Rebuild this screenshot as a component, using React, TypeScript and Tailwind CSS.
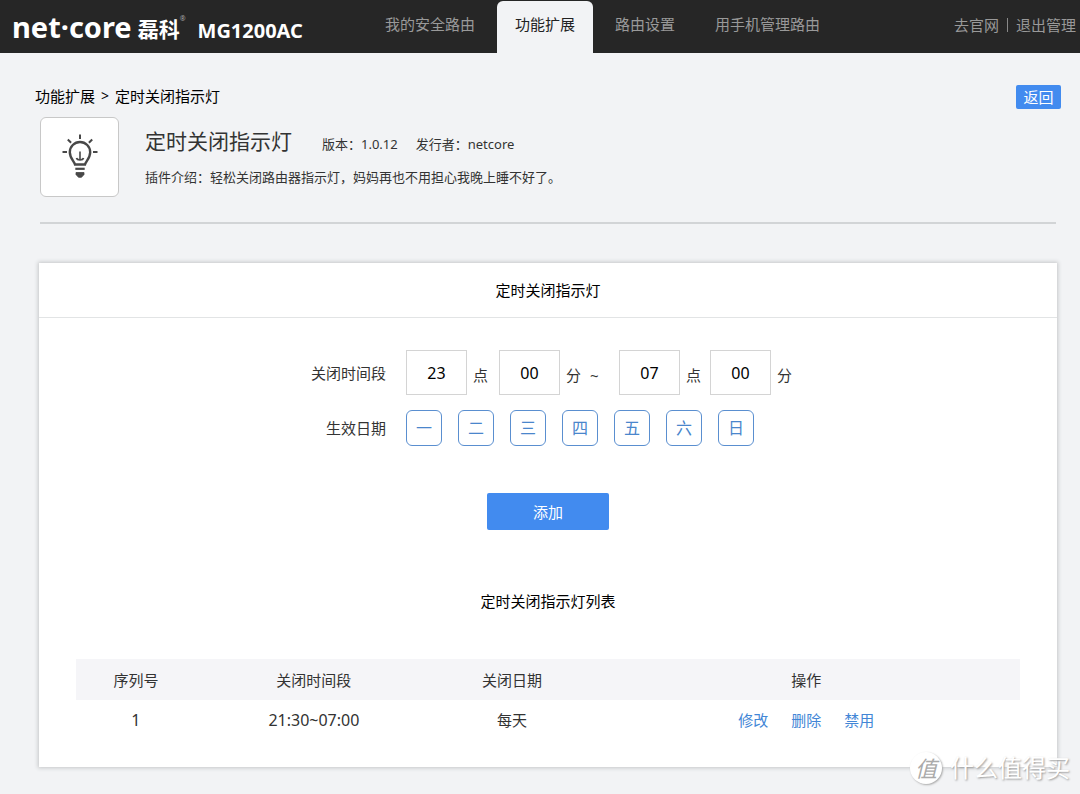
import { useState } from "react";

const NAV_ITEMS = ["我的安全路由", "功能扩展", "路由设置", "用手机管理路由"];
const DAYS = ["一", "二", "三", "四", "五", "六", "日"];

function Header() {
  return (
    <header className="flex h-[53px] items-stretch justify-between bg-[#262626] pr-1 pl-3 text-[15px] leading-5 text-[#999999]">
      <div className="flex items-stretch">
        <div className="flex w-[355px] shrink-0 items-start pt-[7px] text-white">
          <span className="text-[29px] leading-10 font-bold">net·core</span>
          <span className="ml-1.5 text-[21px] leading-11 font-bold">磊科</span>
          <span className="pt-1 text-[7px] leading-4 text-[#aaaaaa]">®</span>
          <span className="ml-3 pt-1 text-[20px] leading-10 font-bold">MG1200AC</span>
        </div>
        <nav className="flex items-stretch gap-1 pt-px">
          {NAV_ITEMS.map((item, i) => (
            <a
              key={item}
              href="#"
              className={
                i === 1
                  ? "rounded-t-md bg-[#f2f3f5] px-[18px] pt-[13px] whitespace-nowrap text-[#222222]"
                  : "px-[18px] pt-[13px] whitespace-nowrap"
              }
            >
              {item}
            </a>
          ))}
        </nav>
      </div>
      <div className="flex items-center gap-2 pb-1 whitespace-nowrap">
        <a href="#">去官网</a>
        <span className="h-3.5 w-px bg-[#888888]" />
        <a href="#">退出管理</a>
      </div>
    </header>
  );
}

function BulbIcon() {
  return (
    <svg width="44" height="48" viewBox="0 0 44 48" fill="none" stroke="#484848" strokeWidth="2" aria-hidden="true">
      <path d="M22 1.500v4.500M9.800 6.500l3.300 3.300M34.200 6.500l-3.300 3.300M4.500 19h4.500M35 19h4.500" />
      <path d="M17 31.500c-.8-3.200-5.200-6.300-5.200-12.300a10.200 10.200 0 0 1 20.400 0c0 6-4.400 9.100-5.200 12.300z" strokeWidth="2.400" />
      <path d="M22 18.500v8" strokeWidth="1.600" />
      <path d="M18.500 25c.8 2.500 6.200 2.500 7 0" strokeWidth="1.800" />
      <path d="M17.300 35.800h9.400" strokeWidth="2.200" />
      <path d="M18 39.500h8v2l-2.500 2.800h-3L18 41.500z" fill="#484848" strokeWidth="0.800" />
    </svg>
  );
}

function PluginInfo() {
  return (
    <section className="mr-6 ml-10 flex gap-[26px] border-b-2 border-[#d2d4d6] pb-[25px] text-[13px] leading-5 text-[#333333]">
      <div className="flex h-20 w-[79px] shrink-0 items-center justify-center rounded-md border border-[#c8c8c8] bg-white">
        <BulbIcon />
      </div>
      <div className="pt-2">
        <div className="flex items-baseline">
          <h1 className="text-[21px] leading-8">定时关闭指示灯</h1>
          <span className="ml-[30px]">版本：1.0.12</span>
          <span className="ml-[18px]">发行者：netcore</span>
        </div>
        <p className="mt-2.5">插件介绍：轻松关闭路由器指示灯，妈妈再也不用担心我晚上睡不好了。</p>
      </div>
    </section>
  );
}

function TimeBox({ label, initial }: { label: string; initial: string }) {
  const [value, setValue] = useState(initial);
  return (
    <input
      type="text"
      aria-label={label}
      value={value}
      onChange={(e) => setValue(e.target.value)}
      className="h-[45px] w-[61px] border border-[#d4d4d4] bg-white text-center text-[16px] text-black"
    />
  );
}

function ScheduleForm() {
  const [selected, setSelected] = useState<string[]>([]);
  const toggle = (day: string) =>
    setSelected((s) => (s.includes(day) ? s.filter((d) => d !== day) : [...s, day]));

  return (
    <form onSubmit={(e) => e.preventDefault()}>
      <div className="grid grid-cols-[347fr_651fr] items-center gap-x-5 gap-y-[15px] pt-8">
        <span className="text-right">关闭时间段</span>
        <div className="flex items-center">
          <TimeBox label="开始时" initial="23" />
          <span className="w-8 pt-1 pl-1.5">点</span>
          <TimeBox label="开始分" initial="00" />
          <span className="w-[30px] pt-1 pl-1.5">分</span>
          <span className="w-[29px] pt-1">~</span>
          <TimeBox label="结束时" initial="07" />
          <span className="w-[30px] pt-1 pl-1.5">点</span>
          <TimeBox label="结束分" initial="00" />
          <span className="pt-1 pl-1.5">分</span>
        </div>
        <span className="text-right">生效日期</span>
        <div className="flex gap-4">
          {DAYS.map((day) => (
            <button
              key={day}
              type="button"
              aria-pressed={selected.includes(day)}
              onClick={() => toggle(day)}
              className="h-9 w-9 rounded-md border border-[#5a8fd0] text-[16px] text-[#4a86cc] aria-pressed:bg-[#e3eefc]"
            >
              {day}
            </button>
          ))}
        </div>
      </div>
      <div className="mt-[47px] flex justify-center">
        <button type="submit" className="h-[37px] w-[122px] rounded-xs bg-[#428bef] text-white">
          添加
        </button>
      </div>
    </form>
  );
}

function ScheduleTable() {
  return (
    <table className="w-full table-fixed text-center">
      <thead>
        <tr className="h-[41px] bg-[#f5f5f8]">
          <th className="w-[12.7%] font-normal">序列号</th>
          <th className="w-[25%] font-normal">关闭时间段</th>
          <th className="w-[17%] font-normal">关闭日期</th>
          <th className="font-normal">操作</th>
        </tr>
      </thead>
      <tbody>
        <tr className="h-10">
          <td className="text-[16px]">1</td>
          <td className="text-[16px]">21:30~07:00</td>
          <td>每天</td>
          <td>
            <div className="flex justify-center gap-[23px] text-[#4286d6]">
              <a href="#">修改</a>
              <a href="#">删除</a>
              <a href="#">禁用</a>
            </div>
          </td>
        </tr>
      </tbody>
    </table>
  );
}

function Watermark() {
  return (
    <div className="absolute right-2.5 bottom-2.5 flex items-center gap-2 text-white">
      <span className="flex h-8 w-8 items-center justify-center rounded-full bg-white text-[22px] leading-8 text-[#aaaaaa] italic shadow-[1px_1px_2px_#aaaaaa]">
        值
      </span>
      <span className="text-[24px] leading-8 [text-shadow:1px_1px_2px_#999999]">什么值得买</span>
    </div>
  );
}

export default function App() {
  return (
    <div className="relative min-h-screen bg-[#f2f3f5] pb-[27px] font-['Noto_Sans','Noto_Sans_CJK_SC',sans-serif] text-[15px] leading-5 text-[#333333]">
      <Header />
      <main>
        <div className="flex items-center justify-between pt-8 pr-[19px] pb-2 pl-[35px]">
          <div className="flex gap-1.5 pb-0.5 text-black">
            <a href="#">功能扩展</a>
            <span className="text-[14px]">&gt;</span>
            <span>定时关闭指示灯</span>
          </div>
          <button type="button" className="h-6 w-[45px] rounded-xs bg-[#428bef] text-white">
            返回
          </button>
        </div>
        <PluginInfo />
        <section className="mt-[39px] mr-[23px] ml-[39px] bg-white pb-[27px] shadow-[0_0_4px_1px_#c4c6c8]">
          <h2 className="border-b border-[#e2e4e5] pt-[17px] pb-[17px] text-center text-black">定时关闭指示灯</h2>
          <ScheduleForm />
          <h2 className="pt-[61px] pb-12 text-center text-black">定时关闭指示灯列表</h2>
          <div className="px-[37px]">
            <ScheduleTable />
          </div>
        </section>
      </main>
      <Watermark />
    </div>
  );
}
